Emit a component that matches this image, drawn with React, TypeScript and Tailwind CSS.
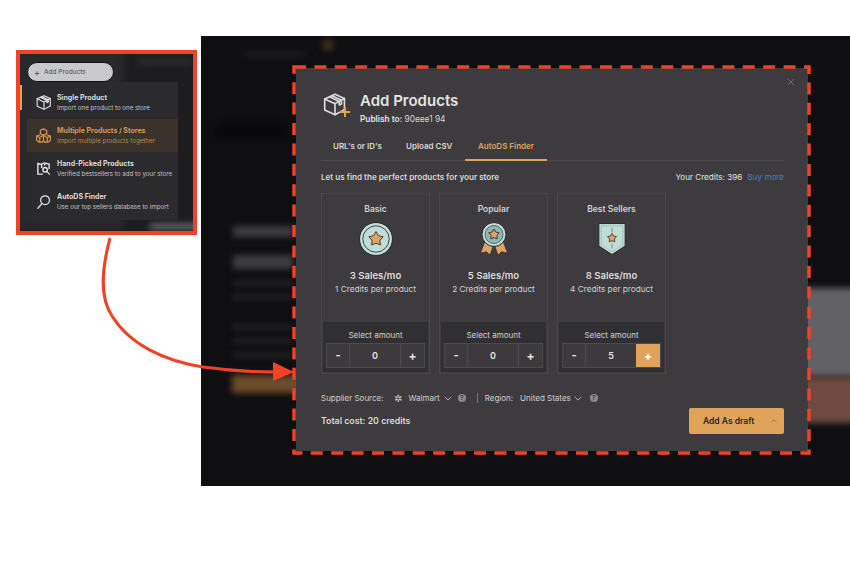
import React from "react";

const font = { fontFamily: "Inter, 'Noto Sans', sans-serif" };

const BoxIcon = ({ className = "" }: { className?: string }) => (
  <svg viewBox="0 0 28 28" className={className} fill="none" stroke="currentColor" strokeWidth="1.9" strokeLinejoin="round" strokeLinecap="round">
    <path d="M2 7.5 14 2l11 5v13l-11 6-12-5.5z" />
    <path d="M2 7.5 14 13l11-6M14 13v13M7.5 5l11.5 5.5v4l2.5-1.2V9L10 3.5" />
  </svg>
);

const CubesIcon = () => (
  <svg viewBox="0 0 32 28" className="w-[17px] h-[15px] text-[#d99a50]" fill="none" stroke="currentColor" strokeWidth="2.2" strokeLinejoin="round">
    <path d="M16 1.5l6 3v6l-6 3-6-3v-6z" />
    <path d="M10 12.5l-7 2.5v8l4 3.5h7l2-3 2 3h7l4-3.5v-8l-7-2.5" />
    <path d="M16 13.5v10M3 15l6 3 7-4.5 7 4.5 6-3M9 18v8M23 18v8" />
  </svg>
);

const PickedIcon = () => (
  <svg viewBox="0 0 24 24" className="w-[15px] h-[15px] text-[#e8e8e8]" fill="none" stroke="currentColor" strokeWidth="2.2">
    <path d="M11 21H3V4l5 1.5L13 3l8 2v8" />
    <path d="M9 6v5M14 4v3" />
    <circle cx="14.5" cy="14" r="3.6" />
    <path d="M17.5 17l4 4" strokeLinecap="round" />
  </svg>
);

const SearchIcon = () => (
  <svg viewBox="0 0 24 24" className="w-[15px] h-[16px] text-[#e8e8e8]" fill="none" stroke="currentColor" strokeWidth="2" strokeLinecap="round">
    <circle cx="14.5" cy="9" r="7" />
    <path d="M9.5 14.5 3 22" />
  </svg>
);

const Star = ({ cx, cy, r }: { cx: number; cy: number; r: number }) => {
  const pts: string[] = [];
  for (let i = 0; i < 10; i++) {
    const rad = i % 2 === 0 ? r : r * 0.55;
    const a = (Math.PI / 5) * i - Math.PI / 2;
    pts.push(`${cx + rad * Math.cos(a)},${cy + rad * Math.sin(a)}`);
  }
  return <polygon points={pts.join(" ")} fill="#dfa363" stroke="#3a3033" strokeWidth="0.9" strokeLinejoin="round" />;
};

const BasicBadge = () => (
  <svg viewBox="0 0 36 36" className="w-[36px] h-[36px]">
    <circle cx="18" cy="18" r="16.5" fill="#bfdcd5" stroke="#24242a" strokeWidth="1" />
    <circle cx="18" cy="18" r="13.2" fill="none" stroke="#24242a" strokeWidth="0.8" />
    <Star cx={18} cy={18} r={7.5} />
  </svg>
);

const PopularBadge = () => (
  <svg viewBox="0 0 36 36" className="w-[36px] h-[36px]">
    <path d="M9 20 4.5 32l6-1.2L14 34l4-11zM27 20l4.5 12-6-1.2L22 34l-4-11z" fill="#dfa363" stroke="#302a2c" strokeWidth="0.7" />
    <circle cx="18" cy="13.5" r="12" fill="#bfdcd5" stroke="#24242a" strokeWidth="1" />
    <circle cx="18" cy="13.5" r="9" fill="#8fb6b6" stroke="#24242a" strokeWidth="0.6" />
    <Star cx={18} cy={13.5} r={5.5} />
  </svg>
);

const ShieldBadge = () => (
  <svg viewBox="0 0 32 36" className="w-[30px] h-[36px]">
    <path d="M2 1.5h28v24L16 34.5 2 25.5z" fill="#bfdcd5" stroke="#24242a" strokeWidth="1" />
    <path d="M4.5 4h23v20.3L16 31.6 4.5 24.3z" fill="none" stroke="#8fb0aa" strokeWidth="0.6" />
    <path d="M16 6v5M16 23v5" stroke="#4d6a66" strokeWidth="0.7" />
    <Star cx={16} cy={17} r={5} />
  </svg>
);

const Stepper = ({ value, active }: { value: number; active?: boolean }) => (
  <div className="flex h-[25px] border border-[#4b4a4d] bg-[#3c3a3d] text-[#e4e4e4] font-bold">
    <div className="w-[23px] flex items-center justify-center border-r border-[#4b4a4d] text-[11px]">-</div>
    <div className="flex-1 flex items-center justify-center text-[9px] font-semibold">{value}</div>
    <div className={`w-[24px] flex items-center justify-center text-[12px] ${active ? "bg-[#dfa35a] text-white" : "border-l border-[#4b4a4d]"}`}>+</div>
  </div>
);

const PlanCard = ({ title, badge, sales, credits, value, active }: { title: string; badge: React.ReactNode; sales: string; credits: string; value: number; active?: boolean }) => (
  <div className="w-[109px] h-[181px] border border-[#484749] flex flex-col">
    <div className="flex-1 flex flex-col items-center pt-[10px]">
      <div className="text-[8.5px] leading-[11px] font-semibold text-[#d2d2d2]">{title}</div>
      <div className="h-[36px] mt-[6px] flex items-center justify-center">{badge}</div>
      <div className="mt-[13px] text-[9.5px] leading-[12px] font-semibold text-[#dcdcdc]">{sales}</div>
      <div className="mt-[2px] text-[8.2px] leading-[11px] text-[#d2d2d2]">{credits}</div>
    </div>
    <div className="h-[50px] mb-[1px] mx-[1px] bg-[#302f31] px-[3px]">
      <div className="h-[21px] pt-[4px] flex items-center justify-center text-[8px] text-[#d2d2d2]">Select amount</div>
      <Stepper value={value} active={active} />
    </div>
  </div>
);

const Chevron = () => (
  <svg viewBox="0 0 10 6" className="w-[8px] h-[5px] text-[#d2d2d2]" fill="none" stroke="currentColor" strokeWidth="1">
    <path d="M1 1l4 4 4-4" />
  </svg>
);

const Help = () => (
  <span className="w-[8px] h-[8px] rounded-full bg-[#8b8a8d] text-[#39383a] text-[6px] leading-[8px] font-bold text-center">?</span>
);

const MenuRow = ({ icon, title, desc, active }: { icon: React.ReactNode; title: string; desc: string; active?: boolean }) => (
  <div className={`h-[33px] flex items-center ${active ? "bg-[#3a322b] -ml-[1px] pl-[6px]" : "pl-[5px]"}`}>
    <div className="w-[21px] flex justify-center mr-[3px]">{icon}</div>
    <div>
      <div className={`text-[7px] leading-[10px] font-bold ${active ? "text-[#d99a50]" : "text-[#dcdcdc]"}`}>{title}</div>
      <div className={`text-[6.2px] leading-[10px] ${active ? "text-[#b98a52]" : "text-[#c4c4c4]"}`}>{desc}</div>
    </div>
  </div>
);

const Blurred = ({ className }: { className: string }) => <div className={`absolute blur-[3px] ${className}`} />;

export default function App() {
  return (
    <div className="relative w-[850px] h-[567px] bg-white overflow-hidden" style={font}>
      {/* blurred dashboard behind the modal */}
      <div className="absolute left-[201px] top-[36px] w-[649px] h-[450px] bg-[#0f0e10] overflow-hidden">
        <Blurred className="left-[42px] top-[16px] w-[62px] h-[5px] bg-[#201f21]" />
        <Blurred className="left-[121px] top-[3px] w-[12px] h-[12px] rounded-full bg-[#3d3419]" />
        <Blurred className="left-[14px] top-[88px] w-[70px] h-[14px] rounded-md bg-[#08080a]" />
        <Blurred className="left-[32px] top-[190px] w-[60px] h-[11px] bg-[#3e3d40]" />
        <Blurred className="left-[32px] top-[219px] w-[60px] h-[14px] bg-[#3e3d40]" />
        <Blurred className="left-[32px] top-[245px] w-[60px] h-[4px] bg-[#2b2a2d]" />
        <Blurred className="left-[32px] top-[259px] w-[60px] h-[4px] bg-[#2b2a2d]" />
        <Blurred className="left-[32px] top-[289px] w-[60px] h-[4px] bg-[#2b2a2d]" />
        <Blurred className="left-[32px] top-[303px] w-[60px] h-[4px] bg-[#2b2a2d]" />
        <Blurred className="left-[32px] top-[317px] w-[60px] h-[4px] bg-[#2b2a2d]" />
        <Blurred className="left-[31px] top-[339px] w-[70px] h-[18px] bg-[#6b4c2c]" />
        <Blurred className="left-[590px] top-[252px] w-[70px] h-[89px] bg-[#626165]" />
        <Blurred className="left-[590px] top-[341px] w-[70px] h-[46px] bg-[#6e4a42]" />
      </div>

      {/* modal */}
      <div className="absolute left-[296px] top-[68px] w-[512px] h-[383px] bg-[#3d3b3e] pl-[25px] pr-[24px] pt-[24px] text-[#d8d8d8]">
        <svg viewBox="0 0 10 10" className="absolute right-[13px] top-[10px] w-[8px] h-[8px] text-[#77767a]" fill="none" stroke="currentColor" strokeWidth="1">
          <path d="M1 1l8 8M9 1l-8 8" />
        </svg>
        <div className="flex items-start h-[47px]">
          <div className="relative ml-[2px] w-[28px] h-[28px] mr-[9px]">
            <BoxIcon className="w-[24px] h-[25px] text-[#dcdcdc]" />
            <svg viewBox="0 0 10 10" className="absolute right-[1px] bottom-[3px] w-[10px] h-[10px] text-[#dfa35a]" fill="none" stroke="currentColor" strokeWidth="2">
              <path d="M5 0v10M0 5h10" />
            </svg>
          </div>
          <div>
            <div className="text-[15px] leading-[18px] font-semibold text-[#e4e4e4]">Add Products</div>
            <div className="mt-[3px] text-[8.3px] leading-[12px]"><span className="font-semibold text-[#e4e4e4]">Publish to:</span> 90eee1 94</div>
          </div>
        </div>
        <div className="flex border-b border-[#4b4a4d] h-[22px] text-[8px] font-semibold">
          <div className="pl-[12px] w-[85px] pt-[1px]">URL's or ID's</div>
          <div className="w-[59px] pt-[1px]">Upload CSV</div>
          <div className="w-[82px] h-[22px] border-b-[2px] border-[#dfa35a] text-center text-[#dfa35a] pt-[1px]">AutoDS Finder</div>
        </div>
        <div className="flex justify-between items-center h-[32px] text-[8.1px]">
          <div className="font-semibold">Let us find the perfect products for your store</div>
          <div><span className="text-[#e4e4e4]">Your Credits: 396</span> <span className="ml-[3px] text-[#4a78c9]">Buy more</span></div>
        </div>
        <div className="flex gap-[9px]">
          <PlanCard title="Basic" badge={<BasicBadge />} sales="3 Sales/mo" credits="1 Credits per product" value={0} />
          <PlanCard title="Popular" badge={<PopularBadge />} sales="5 Sales/mo" credits="2 Credits per product" value={0} />
          <PlanCard title="Best Sellers" badge={<ShieldBadge />} sales="8 Sales/mo" credits="4 Credits per product" value={5} active />
        </div>
        <div className="flex justify-between mt-[16px]">
          <div>
            <div className="flex items-center h-[16px] text-[8px] text-[#cfcfcf]">
              <span>Supplier Source:</span>
              <span className="ml-[10px] text-[10px] leading-none text-[#cfcfcf]">✲</span>
              <span className="ml-[7px]">Walmart</span>
              <span className="ml-[4px]"><Chevron /></span>
              <span className="ml-[6px] flex"><Help /></span>
              <span className="ml-[11px] mr-[7px] w-px h-[10px] bg-[#77767a]" />
              <span>Region:</span>
              <span className="ml-[7px]">United States</span>
              <span className="ml-[3px]"><Chevron /></span>
              <span className="ml-[8px] flex"><Help /></span>
            </div>
            <div className="mt-[8px] text-[8.8px] leading-[14px] font-semibold">Total cost: 20 credits</div>
          </div>
          <div className="mt-[18px] w-[95px] h-[26px] bg-[#dfa35a] rounded-[2px] flex items-center pl-[14px] text-[8.5px] font-semibold text-[#2a2724]">
            <span className="flex-1">Add As draft</span>
            <svg viewBox="0 0 10 6" className="w-[6px] h-[4px] mr-[7px] text-[#8a6a40]" fill="none" stroke="currentColor" strokeWidth="1.2">
              <path d="M1 5l4-4 4 4" />
            </svg>
          </div>
        </div>
      </div>

      {/* left inset with the Add Products menu */}
      <div className="absolute left-[16px] top-[50px] w-[181px] h-[185px] border-[4px] border-[#ee4327] bg-[#1d1c1f] overflow-hidden">
        <Blurred className="left-[-4px] top-[-4px] w-[108px] h-[180px] bg-[#29282b]" />
        <Blurred className="left-[118px] top-[6px] w-[55px] h-[4px] bg-[#343336]" />
        <Blurred className="left-[130px] top-[170px] w-[50px] h-[5px] bg-[#77767a]" />
        <div className="absolute left-0 top-[31px] w-[2px] h-[25px] bg-[#dfa35a]" />
        <div className="relative ml-[7px] mt-[8px] w-[87px] h-[20px] rounded-full bg-[#c9c8cc] border border-[#111] flex items-center pl-[6px] pt-[1px] text-[6.5px] text-[#4a494c]">
          <span className="text-[9px] leading-none mr-[4px]">+</span>Add Products
        </div>
        <div className="relative ml-[8px] w-[150px] h-[138px] bg-[#2b2a2d] pt-[4px]">
          <MenuRow icon={<BoxIcon className="w-[16px] h-[17px] text-[#e8e8e8]" />} title="Single Product" desc="Import one product to one store" />
          <MenuRow active icon={<CubesIcon />} title="Multiple Products / Stores" desc="Import multiple products together" />
          <MenuRow icon={<PickedIcon />} title="Hand-Picked Products" desc="Verified bestsellers to add to your store" />
          <MenuRow icon={<SearchIcon />} title="AutoDS Finder" desc="Use our top sellers database to import" />
        </div>
      </div>

      {/* annotations */}
      <svg className="absolute inset-0 w-[850px] h-[567px] pointer-events-none" viewBox="0 0 850 567" fill="none">
        <rect x="294" y="67" width="515" height="386" stroke="#ee4327" strokeWidth="3.5" strokeDasharray="12 8.4" />
        <path d="M110 238C101 272 100 298 112 316C130 345 165 361 203 367C225 370 250 372 275 372" stroke="#ee4327" strokeWidth="3" />
        <path d="M273 362L294 372L273 381z" fill="#ee4327" />
      </svg>
    </div>
  );
}
